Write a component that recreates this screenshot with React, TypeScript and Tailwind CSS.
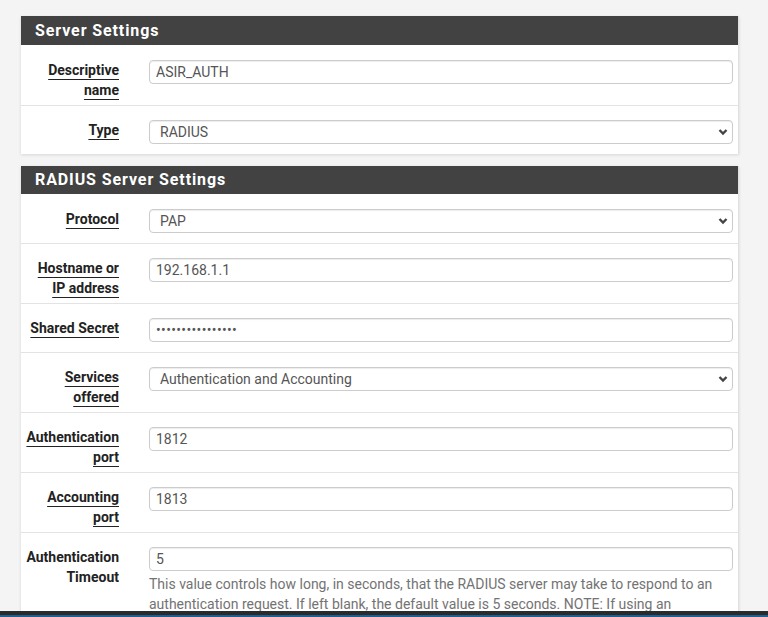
import React from "react";

const font = { fontFamily: "Roboto, 'Liberation Sans', sans-serif" };

function Chevron() {
  return (
    <svg
      className="pointer-events-none absolute right-[5px] top-1/2 -translate-y-1/2"
      width="10"
      height="8"
      viewBox="0 0 10 8"
    >
      <path d="M1.5 2 L5 5.5 L8.5 2" fill="none" stroke="#444" strokeWidth="2.4" />
    </svg>
  );
}

function TextInput({ value, type = "text" }: { value: string; type?: string }) {
  return (
    <input
      readOnly
      type={type}
      value={value}
      className={
        "block h-[24px] w-full rounded-[4px] border border-[#cccccc] bg-white px-[6px] text-[14px] text-[#555555] shadow-[inset_0_1px_1px_rgba(0,0,0,0.075)] outline-none " +
        (type === "password" ? "tracking-[0.35px]" : "")
      }
      style={font}
    />
  );
}

function Select({ value }: { value: string }) {
  return (
    <div className="relative">
      <div
        className="flex h-[24px] w-full items-center rounded-[4px] border border-[#cccccc] bg-white pl-[10px] text-[14px] text-[#555555] shadow-[inset_0_1px_1px_rgba(0,0,0,0.075)]"
        style={font}
      >
        {value}
      </div>
      <Chevron />
    </div>
  );
}

function Label({ lines, underline = true }: { lines: string[]; underline?: boolean }) {
  return (
    <div className="w-[128px] shrink-0 pr-[30px] text-right text-[14px] font-bold leading-[20px] text-[#222222]">
      {lines.map((l, i) => (
        <div key={i}>
          <span className={underline ? "underline decoration-[#222222] underline-offset-[4px]" : ""}>{l}</span>
        </div>
      ))}
    </div>
  );
}

function Row({
  label,
  first,
  underline = true,
  children,
}: {
  label: string[];
  first?: boolean;
  underline?: boolean;
  children: React.ReactNode;
}) {
  return (
    <div
      className={
        "flex pb-[5px] " + (first ? "pt-[15px]" : "border-t border-[#e3e3e3] pt-[14px]")
      }
    >
      <Label lines={label} underline={underline} />
      <div className="min-h-[29px] flex-1 pr-[5px]">{children}</div>
    </div>
  );
}

function Panel({
  title,
  tall,
  children,
}: {
  title: string;
  tall?: boolean;
  children: React.ReactNode;
}) {
  return (
    <div className="border-r border-[#e0e0e0] bg-white shadow-[0_1px_3px_rgba(0,0,0,0.12)]">
      <div
        className={
          "flex items-center bg-[#424242] pl-[14px] text-[16px] font-bold tracking-[0.9px] text-white " +
          (tall ? "h-[29px]" : "h-[28px]")
        }
      >
        {title}
      </div>
      {children}
    </div>
  );
}

export default function App() {
  return (
    <div className="flex h-[617px] w-[768px] flex-col overflow-hidden bg-[#f4f4f4]" style={font}>
      <div className="flex-1 overflow-hidden pt-[16px] pl-[21px] pr-[29px]">
        <Panel title="Server Settings" tall>
          <Row label={["Descriptive", "name"]} first>
            <TextInput value="ASIR_AUTH" />
          </Row>
          <Row label={["Type"]}>
            <Select value="RADIUS" />
          </Row>
        </Panel>
        <div className="h-[12px]" />
        <Panel title="RADIUS Server Settings">
          <Row label={["Protocol"]} first>
            <Select value="PAP" />
          </Row>
          <Row label={["Hostname or", "IP address"]}>
            <TextInput value="192.168.1.1" />
          </Row>
          <Row label={["Shared Secret"]}>
            <TextInput type="password" value="1234567890123456" />
          </Row>
          <Row label={["Services", "offered"]}>
            <Select value="Authentication and Accounting" />
          </Row>
          <Row label={["Authentication", "port"]}>
            <TextInput value="1812" />
          </Row>
          <Row label={["Accounting", "port"]}>
            <TextInput value="1813" />
          </Row>
          <Row label={["Authentication", "Timeout"]} underline={false}>
            <TextInput value="5" />
            <p className="mt-[3px] text-[14px] leading-[20px] text-[#737373]">
              This value controls how long, in seconds, that the RADIUS server may take to respond to an
              authentication request. If left blank, the default value is 5 seconds. NOTE: If using an
              interactive two-factor authentication system, increase this timeout to account for how long it
              will take the user to receive and enter a token.
            </p>
          </Row>
        </Panel>
      </div>
      <div className="h-[4px] shrink-0 bg-[#2b2b2b]" />
      <div className="h-[2px] shrink-0 bg-[#1f5f8f]" />
    </div>
  );
}
